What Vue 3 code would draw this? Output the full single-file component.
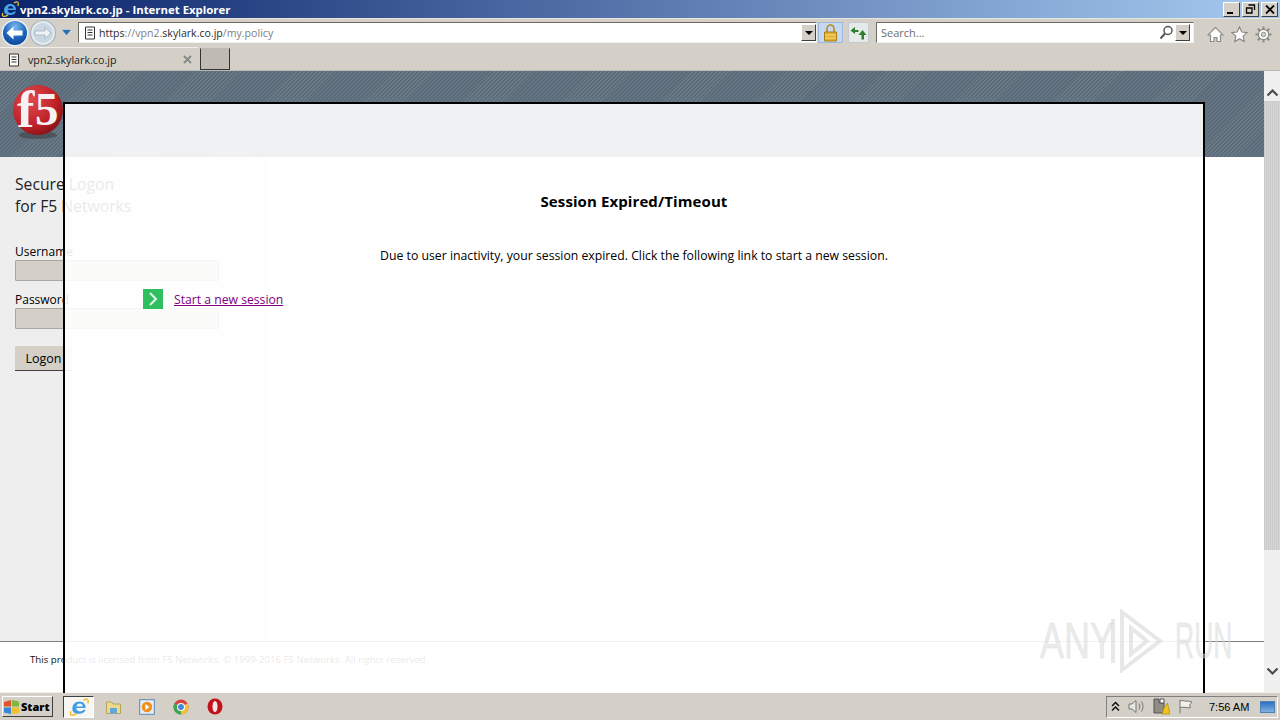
<script setup>
const trayTime = "7:56 AM";
</script>

<template>
  <div class="screen">
    <div class="titlebar">
      <svg class="ie-small" width="18" height="18" viewBox="0 0 18 18">
        <path d="M3 10.500c0-4 3-6.500 6.500-6.500s5.500 2.500 5.500 6H6.500c.2 2 1.500 3 3.200 3 1.500 0 2.500-.6 3.300-1.500h2c-1 2.400-3 3.500-5.500 3.500C5.500 15.500 3 13.500 3 10.500zM6.700 8.500h5.800c-.2-1.500-1.300-2.600-2.900-2.600s-2.600 1.100-2.900 2.600z" fill="#4aa3e8"/>
        <path d="M2 13c-2 3.500 1 4.500 5 2M13 3c3-2 5-1.500 4 3" fill="none" stroke="#f2c230" stroke-width="1.300"/>
      </svg>
      <span class="title-text">vpn2.skylark.co.jp - Internet Explorer</span>
      <div class="win-btns">
        <span class="win-btn"><i class="min"></i></span>
        <span class="win-btn"><svg width="11" height="10" viewBox="0 0 11 10"><path d="M3.500 1h6v5M1.500 4h5.500v5H1.500z" fill="none" stroke="#000" stroke-width="1.300"/></svg></span>
        <span class="win-btn close"><svg width="10" height="9" viewBox="0 0 10 9"><path d="M1 .5l8 8M9 .5l-8 8" stroke="#000" stroke-width="1.800"/></svg></span>
      </div>
    </div>

    <div class="toolbar">
      <svg class="nav-icon" width="30" height="30" viewBox="0 0 30 30">
        <defs>
          <radialGradient id="backg" cx="50%" cy="25%" r="75%"><stop offset="0" stop-color="#7cbcf0"/><stop offset="0.6" stop-color="#1f66bd"/><stop offset="1" stop-color="#0d4796"/></radialGradient>
        </defs>
        <circle cx="15" cy="15" r="13.500" fill="#e8eef3"/>
        <circle cx="15" cy="15" r="12" fill="url(#backg)"/>
        <path d="M6.500 15l7-6.500v4h9v5h-9v4z" fill="#fff"/>
      </svg>
      <svg class="nav-icon fwd" width="28" height="28" viewBox="0 0 28 28">
        <circle cx="14" cy="14" r="12.500" fill="#e4ebf0" stroke="#a9b4bd" stroke-width="1.200"/>
        <circle cx="14" cy="14" r="10" fill="#c9d7e3"/>
        <path d="M22 14l-6-5.500v3.500H6v4h10v3.500z" fill="#eff3f6" stroke="#9aa9b6" stroke-width=".7"/>
      </svg>
      <svg class="drop" width="11" height="7" viewBox="0 0 11 7"><path d="M.5.500h10L5.500 6.500z" fill="#2d6ea8" stroke="#cfe0ee" stroke-width=".6"/></svg>

      <div class="address">
        <svg width="12" height="14" viewBox="0 0 12 14"><path d="M1.500 1h9v12h-9zM3.500 4h5M3.500 6.500h5M3.500 9h5" fill="#fff" stroke="#333" stroke-width="1"/></svg>
        <span class="url">https<span class="dim">://</span><span class="dim">vpn2.</span>skylark.co.jp<span class="dim">/my.policy</span></span>
        <span class="combo-arrow"></span>
      </div>

      <span class="lock-btn">
        <svg width="15" height="18" viewBox="0 0 15 18"><path d="M4 8V4.500a3.500 3.500 0 0 1 7 0V8" fill="none" stroke="#b78a1e" stroke-width="1.600"/><path d="M1.500 8h12v9h-12z" fill="#e3b12e" stroke="#a87d12" stroke-width="1"/><path d="M2 11h11M2 14h11" stroke="#f5dc8a" stroke-width="1"/></svg>
      </span>
      <span class="refresh-btn">
        <svg width="17" height="14" viewBox="0 0 17 14"><path d="M8.500 4H5V1L.5 4.500 5 8V6h3.500z" fill="#2f7d2f"/><path d="M10 9H8.500l4-5 4 5H14v4.500h-2.500V9z" fill="#2f7d2f"/></svg>
      </span>

      <div class="search">
        <span class="search-text">Search...</span>
        <svg width="15" height="15" viewBox="0 0 15 15"><circle cx="9" cy="5.500" r="4" fill="none" stroke="#555" stroke-width="1.500"/><path d="M6 8.500L1.500 13.500" stroke="#555" stroke-width="2"/></svg>
        <span class="combo-arrow"></span>
      </div>

      <div class="tool-icons">
        <svg width="17" height="17" viewBox="0 0 17 17"><path d="M8.500 1.500L1 9h2.500v6.500h3.500v-4h3v4h3.500V9H16z" fill="#fff" stroke="#8b8b86" stroke-width="1.200"/></svg>
        <svg width="17" height="17" viewBox="0 0 17 17"><path d="M8.500 1l2.300 5 5.200.6-3.900 3.500 1.100 5.400-4.700-2.800-4.700 2.800 1.100-5.400L1 6.600 6.200 6z" fill="#fff" stroke="#8b8b86" stroke-width="1.200"/></svg>
        <svg width="17" height="17" viewBox="0 0 17 17"><circle cx="8.500" cy="8.500" r="5.200" fill="#fff" stroke="#8b8b86" stroke-width="1.200"/><circle cx="8.500" cy="8.500" r="2.200" fill="#d4d0c8" stroke="#8b8b86"/><path d="M8.500.5v3M8.500 13.500v3M.5 8.500h3M13.500 8.500h3M2.800 2.800L5 5M12 12l2.200 2.200M14.200 2.800L12 5M5 12l-2.200 2.200" stroke="#8b8b86" stroke-width="2"/></svg>
      </div>
    </div>

    <div class="tabrow">
      <div class="tab">
        <svg width="12" height="14" viewBox="0 0 12 14"><path d="M1.500 1h9v12h-9zM3.500 4h5M3.500 6.500h5M3.500 9h5" fill="#fff" stroke="#333" stroke-width="1"/></svg>
        <span class="tab-label">vpn2.skylark.co.jp</span>
        <svg class="tab-x" width="9" height="9" viewBox="0 0 9 9"><path d="M1 1l7 7M8 1l-7 7" stroke="#8a8a86" stroke-width="2"/></svg>
      </div>
      <span class="new-tab"></span>
    </div>

    <div class="viewport">
      <div class="page">
        <header class="page-head">
          <svg class="f5-logo" width="54" height="56" viewBox="0 0 54 56">
            <defs>
              <radialGradient id="ball" cx="35%" cy="30%" r="75%"><stop offset="0" stop-color="#e04a4c"/><stop offset="0.7" stop-color="#bd2027"/><stop offset="1" stop-color="#861216"/></radialGradient>
            </defs>
            <ellipse cx="26" cy="51" rx="19" ry="4" fill="#3f3f42" opacity=".6"/>
            <circle cx="26" cy="26" r="25" fill="url(#ball)"/>
            <text x="5" y="43" class="f5-f">f</text>
            <text x="23" y="41" class="f5-5">5</text>
          </svg>
        </header>
        <div class="page-body">
          <aside class="login">
            <div class="login-title">Secure Logon<br />for F5 Networks</div>
            <label class="field-label first">Username</label>
            <div class="fake-input"></div>
            <label class="field-label">Password</label>
            <div class="fake-input"></div>
            <div class="logon">Logon</div>
          </aside>
        </div>
        <footer class="page-foot">This product is licensed from F5 Networks. © 1999-2016 F5 Networks. All rights reserved.</footer>
      </div>

      <div class="scrollbar">
        <svg width="13" height="9" viewBox="0 0 13 9"><path d="M1.500 7.500l5-5 5 5" fill="none" stroke="#4c4c4c" stroke-width="2.200"/></svg>
        <div class="scroll-track"><div class="scroll-thumb"></div></div>
        <svg width="13" height="9" viewBox="0 0 13 9"><path d="M1.500 1.500l5 5 5-5" fill="none" stroke="#4c4c4c" stroke-width="2.200"/></svg>
      </div>

      <div class="modal">
        <div class="modal-inner">
          <h1>Session Expired/Timeout</h1>
          <p>Due to user inactivity, your session expired. Click the following link to start a new session.</p>
          <div class="restart">
            <span class="go"><svg width="10" height="14" viewBox="0 0 10 14"><path d="M2 1l6 6-6 6" fill="none" stroke="#e6f7ea" stroke-width="2"/></svg></span>
            <a href="#">Start a new session</a>
          </div>
        </div>
      </div>

      <div class="watermark">
        <span class="wm-any">ANY</span>
        <svg width="54" height="64" viewBox="0 0 54 64"><path d="M3 10v44M12 3l38 29-38 29zM21 19l16 13-16 13z" fill="none" stroke="rgba(215,215,215,.6)" stroke-width="4"/></svg>
        <span class="wm-run">RUN</span>
      </div>
    </div>

    <div class="taskbar">
      <div class="start">
        <svg width="17" height="16" viewBox="0 0 17 16"><path d="M1 3l7-2v6.500H1z" fill="#e0562a"/><path d="M9 1l7 1.500v5H9z" fill="#7cb742"/><path d="M1 8.500h7V15l-7-1.500z" fill="#3a86d8"/><path d="M9 8.500h7v5.500l-7 1z" fill="#f3bf2c"/></svg>
        <b>Start</b>
      </div>
      <div class="task-app active">
        <svg width="20" height="20" viewBox="0 0 18 18"><path d="M3 10.500c0-4 3-6.500 6.500-6.500s5.500 2.500 5.500 6H6.500c.2 2 1.500 3 3.200 3 1.500 0 2.500-.6 3.300-1.500h2c-1 2.400-3 3.500-5.500 3.500C5.500 15.500 3 13.500 3 10.500zM6.700 8.500h5.800c-.2-1.500-1.300-2.600-2.900-2.600s-2.600 1.100-2.900 2.600z" fill="#3f9fe6"/><path d="M2 13c-2 3.500 1 4.500 5 2M13 3c3-2 5-1.500 4 3" fill="none" stroke="#efbe2b" stroke-width="1.300"/></svg>
      </div>
      <div class="task-app">
        <svg width="17" height="16" viewBox="0 0 17 16"><path d="M1.500 3h5l1.500 2h7.500v9.500h-14z" fill="#ecd98b" stroke="#b5a25e"/><path d="M5 9h7v5.500H5z" fill="#5fa8d8"/></svg>
      </div>
      <div class="task-app">
        <svg width="16" height="16" viewBox="0 0 16 16"><rect x=".7" y=".7" width="14.600" height="14.600" fill="#e9eef5" stroke="#5a86b8"/><circle cx="8" cy="8" r="5.200" fill="#ef8f1e"/><path d="M6.300 5l4.300 3-4.300 3z" fill="#fff"/></svg>
      </div>
      <div class="task-app">
        <svg width="16" height="16" viewBox="0 0 16 16"><circle cx="8" cy="8" r="7.500" fill="#d9423a"/><path d="M8 8L14.500 4.300A7.500 7.500 0 0 1 8 15.500z" fill="#f4c430"/><path d="M8 8L8 15.500A7.500 7.500 0 0 1 1.500 4.300z" fill="#3fa650"/><circle cx="8" cy="8" r="3.500" fill="#4a86d8" stroke="#fff" stroke-width="1.200"/></svg>
      </div>
      <div class="task-app">
        <svg width="16" height="17" viewBox="0 0 16 17"><ellipse cx="8" cy="8.500" rx="7.500" ry="8" fill="#c4121a"/><ellipse cx="8" cy="8.500" rx="2.500" ry="5.500" fill="#f4e9e9"/></svg>
      </div>

      <div class="tray">
        <svg width="9" height="11" viewBox="0 0 9 11"><path d="M1 5l3.500-3.500L8 5M1 9.500L4.500 6 8 9.500" fill="none" stroke="#111" stroke-width="1.500"/></svg>
        <svg width="17" height="15" viewBox="0 0 17 15"><path d="M1 5h3l4-3.500v12L4 10H1z" fill="#e6e6e2" stroke="#777"/><path d="M11 4.500c1 2 1 4 0 6M13.500 2.500c2 3 2 7 0 10" fill="none" stroke="#777"/></svg>
        <svg width="17" height="17" viewBox="0 0 17 17"><path d="M1 1h5v4h5v10H1z" fill="#8f8d84" stroke="#555"/><path d="M7 1h4v4H7z" fill="#fff" stroke="#555"/><path d="M11 10l3.500-5 2.500 11h-8z" fill="#f0c419" stroke="#9c7d0c" stroke-width=".6"/></svg>
        <svg width="16" height="15" viewBox="0 0 16 15"><path d="M2 1v13.500M2 2c3-1.500 5 1 8 0l4 1-2.500 3 1 2.500c-3 1-5.500-1-10.500 0" fill="#f2f0ea" stroke="#777"/></svg>
        <span class="clock">{{ trayTime }}</span>
        <span class="show-desktop"></span>
      </div>
    </div>
  </div>
</template>

<style scoped>
.screen {
  width: 1280px;
  height: 720px;
  display: flex;
  flex-direction: column;
  overflow: hidden;
  position: relative;
  background: #d4d0c8;
  font-family: "Open Sans", "Liberation Sans", sans-serif;
  color: #000;
}

.titlebar {
  height: 18px;
  display: flex;
  align-items: center;
  background: linear-gradient(to right, #0a246a, #a6caf0);
  flex: none;
}
.ie-small { margin: 0 1px 0 1px; flex: none; }
.title-text {
  font: 700 11.400px "Open Sans", sans-serif;
  color: #fff;
  white-space: nowrap;
}
.win-btns { margin-left: auto; margin-right: 2px; display: flex; gap: 2px; }
.win-btn {
  width: 15px;
  height: 13px;
  background: #d4d0c8;
  border: 1px solid;
  border-color: #fff #404040 #404040 #fff;
  display: flex;
  align-items: center;
  justify-content: center;
  position: relative;
}
.min { width: 6px; height: 2px; background: #000; position: absolute; left: 3px; bottom: 2px; }

.toolbar {
  height: 28px;
  display: flex;
  align-items: center;
  flex: none;
  box-shadow: inset 0 1px 0 #e8e6e0;
}
.nav-icon { flex: none; margin-top: 1px; }
.fwd { margin-left: -1px; }
.drop { margin: 1px 6px 0 4px; flex: none; }
.address {
  width: 739px;
  height: 21px;
  margin-top: 1px;
  background: #fff;
  box-sizing: border-box;
  border: 1px solid;
  border-color: #6b6b62 #f2f2ee #f2f2ee #6b6b62;
  display: flex;
  align-items: center;
  padding-left: 5px;
  flex: none;
}
.url {
  font-size: 10.600px;
  margin-left: 3px;
  color: #2b2b2b;
  white-space: nowrap;
}
.dim { color: #808080; }
.combo-arrow {
  margin-left: auto;
  width: 15px;
  height: 17px;
  box-sizing: border-box;
  background: #d4d0c8;
  border: 1px solid;
  border-color: #fff #404040 #404040 #fff;
  position: relative;
  flex: none;
}
.combo-arrow::after {
  content: "";
  position: absolute;
  left: 3px;
  top: 6px;
  border-left: 4px solid transparent;
  border-right: 4px solid transparent;
  border-top: 4px solid #000;
}
.lock-btn {
  width: 25px;
  height: 21px;
  margin: 1px 0 0 1px;
  background: #c4d8f2;
  border: 1px solid #9fb9dc;
  box-sizing: border-box;
  display: flex;
  align-items: center;
  justify-content: center;
  flex: none;
}
.refresh-btn {
  width: 21px;
  height: 21px;
  margin: 1px 0 0 5px;
  background: #e6ebe9;
  border: 1px solid #c3cbd0;
  border-radius: 2px;
  box-sizing: border-box;
  display: flex;
  align-items: center;
  justify-content: center;
  flex: none;
}
.search {
  width: 318px;
  height: 21px;
  margin: 1px 0 0 7px;
  background: #fff;
  box-sizing: border-box;
  border: 1px solid;
  border-color: #6b6b62 #f2f2ee #f2f2ee #6b6b62;
  display: flex;
  align-items: center;
  padding-left: 4px;
  flex: none;
}
.search-text { font-size: 11px; color: #6d6d6d; }
.search svg { margin-left: auto; margin-right: 1px; }
.search .combo-arrow { margin-left: 0; margin-right: 3px; }
.tool-icons { display: flex; gap: 7px; margin-left: 13px; padding-top: 4px; }

.tabrow {
  height: 24px;
  display: flex;
  flex: none;
  align-items: stretch;
}
.tab {
  width: 198px;
  height: 24px;
  margin-top: 1px;
  display: flex;
  align-items: center;
  padding-left: 8px;
  box-sizing: border-box;
  border-top: 1px solid #f0eee9;
}
.tab-label { font-size: 10.700px; margin-left: 8px; color: #222; white-space: nowrap; }
.tab-x { margin-left: auto; margin-right: 6px; }
.new-tab {
  width: 30px;
  height: 22px;
  margin-left: 2px;
  margin-top: 2px;
  box-sizing: border-box;
  background: #bfbbb4;
  border: 1px solid #333;
  border-top-color: #bfbbb4;
}

.viewport {
  flex: 1;
  display: flex;
  position: relative;
  min-height: 0;
  background: #fff;
  border-top: 1px solid #b8b8b4;
}
.page { flex: 1; display: flex; flex-direction: column; min-width: 0; }
.page-head {
  height: 86px;
  flex: none;
  background: repeating-linear-gradient(135deg, #6b7a87 0 1px, #5d6c7a 1px 2.800px);
  padding: 13px 0 0 12px;
  box-sizing: border-box;
}
.f5-logo { display: block; }
.f5-f { font: bold 52px "Liberation Serif", serif; fill: #f4f2f2; }
.f5-5 { font: bold 47px "Liberation Serif", serif; fill: #f4f2f2; }
.page-body { flex: 1; background: #fff; min-height: 0; }
.login {
  width: 268px;
  height: 100%;
  box-sizing: border-box;
  background: #eeeeee;
  padding: 16px 15px 0;
}
.login-title { font-size: 15.700px; line-height: 22px; color: #222; }
.field-label { display: block; font-size: 12px; line-height: 17px; margin-top: 10px; }
.field-label.first { margin-top: 26px; }
.fake-input {
  width: 204px;
  height: 21px;
  box-sizing: border-box;
  background: #d4d0c8;
  border: 1px solid #a9a69f;
  border-radius: 1px;
}
.logon {
  width: 57px;
  height: 25px;
  margin-top: 17px;
  box-sizing: border-box;
  background: #d4d0c8;
  border-bottom: 1px solid #404040;
  font-size: 12.500px;
  line-height: 26px;
  text-align: center;
}
.page-foot {
  height: 51px;
  flex: none;
  box-sizing: border-box;
  background: #fff;
  border-top: 1px solid #7d7d7d;
  padding: 11px 0 0 30px;
  font-size: 9.670px;
  color: #111;
}

.scrollbar {
  width: 16px;
  flex: none;
  background: #f0f0f0;
  display: flex;
  flex-direction: column;
  align-items: center;
  padding: 17px 0 16px;
  box-sizing: border-box;
  gap: 4px;
}
.scroll-track { flex: 1; width: 100%; }
.scroll-thumb {
  height: 449px;
  background: repeating-linear-gradient(90deg, #c9c9c9 0 1px, #d6d6d6 1px 2px);
}

/* dialog sits over the login page, that is why the page shows through */
.modal {
  position: absolute;
  left: 63px;
  top: 31px;
  width: 1142px;
  height: 591px;
  box-sizing: border-box;
  border: 2px solid #000;
  border-bottom: none;
  background: rgba(255, 255, 255, 0.9);
}
.modal-inner { padding-top: 87px; }
.modal h1 {
  margin: 0;
  text-align: center;
  font-size: 15px;
  line-height: 20px;
  font-weight: 700;
  letter-spacing: .1px;
}
.modal p {
  margin: 36px 0 0;
  text-align: center;
  font-size: 12.260px;
  line-height: 18px;
}
.restart {
  margin: 24px 0 0 78px;
  display: flex;
  align-items: center;
  gap: 11px;
}
.go {
  width: 20px;
  height: 20px;
  background: #2fbf5f;
  display: flex;
  align-items: center;
  justify-content: center;
}
.restart a { font-size: 12.200px; color: #800080; text-decoration: underline; }

/* screenshot watermark, floats over everything */
.watermark {
  position: absolute;
  left: 1040px;
  top: 538px;
  display: flex;
  align-items: center;
  font: 400 50px "Liberation Sans", sans-serif;
  color: rgba(215, 215, 215, 0.5);
  -webkit-text-stroke: 1px rgba(215, 215, 215, 0.4);
  pointer-events: none;
}
.wm-any, .wm-run {
  display: block;
  white-space: nowrap;
  transform-origin: left center;
  flex: none;
}
.wm-any { width: 62px; margin-right: 8px; transform: scaleX(.72); }
.wm-run { width: 58px; margin-left: 11px; transform: scaleX(.53); }

.taskbar {
  height: 28px;
  flex: none;
  display: flex;
  align-items: center;
  background: #d4d0c8;
  border-top: 1px solid #f0eee9;
  box-sizing: border-box;
  padding-left: 2px;
}
.start {
  width: 51px;
  height: 21px;
  box-sizing: border-box;
  border: 1px solid;
  border-color: #fff #404040 #404040 #fff;
  display: flex;
  align-items: center;
  gap: 1px;
  font: 700 11px "Open Sans", sans-serif;
}
.task-app {
  width: 34px;
  height: 22px;
  display: flex;
  align-items: center;
  justify-content: center;
  flex: none;
}
.task-app.active {
  width: 31px;
  margin: 0 2px 0 10px;
  background: #f7f6f3;
  box-sizing: border-box;
  border: 1px solid;
  border-color: #404040 #fff #fff #404040;
}
.tray {
  margin-left: auto;
  margin-right: 2px;
  width: 172px;
  height: 22px;
  box-sizing: border-box;
  border: 1px solid;
  border-color: #808080 #fff #fff #808080;
  display: flex;
  align-items: center;
  padding-left: 4px;
  gap: 8px;
}
.clock { font: 11px "Liberation Sans", sans-serif; margin-left: 7px; white-space: nowrap; }
.show-desktop {
  width: 15px;
  height: 12px;
  margin-left: auto;
  margin-right: 2px;
  background: linear-gradient(#2f6fc0, #7fb0e2);
  border: 1px solid #4d7fb8;
  box-sizing: border-box;
}
</style>
